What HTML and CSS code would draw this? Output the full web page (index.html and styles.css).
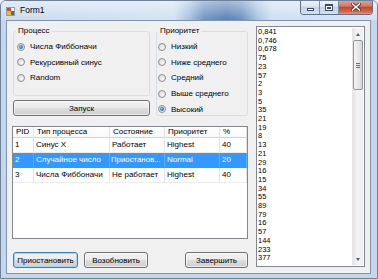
FILE: index.html
```html
<!DOCTYPE html>
<html lang="ru">
<head>
    <meta charset="UTF-8">
    <title>Form1</title>
    <link rel="stylesheet" href="styles.css">
</head>
<body>
    <div class="window">
        <div class="titlebar">
            <svg class="app-icon" width="9" height="9" viewBox="0 0 9 9">
                <rect x="0.5" y="0.5" width="8" height="8" fill="#fff" stroke="#9a9a9a" stroke-width="1"/>
                <rect x="1" y="1" width="4" height="3" fill="#e0452b"/>
                <rect x="1" y="4" width="4" height="4" fill="#f5c400"/>
                <rect x="5" y="4" width="3" height="4" fill="#2d6fd1"/>
            </svg>
            <span class="title">Form1</span>
            <div class="caption-buttons">
                <span class="cap-btn cap-min"><span class="glyph-min"></span></span>
                <span class="cap-btn cap-max"><span class="glyph-max"></span></span>
                <span class="cap-btn cap-close">
                    <svg width="10" height="8" viewBox="0 0 10 8">
                        <path d="M1.5 1 L8.5 7 M8.5 1 L1.5 7" stroke="#4a2a25" stroke-width="3.2" stroke-linecap="square"/>
                        <path d="M1.5 1 L8.5 7 M8.5 1 L1.5 7" stroke="#fff" stroke-width="1.6" stroke-linecap="square"/>
                    </svg>
                </span>
            </div>
        </div>

        <div class="client">
            <div class="left">
                <div class="top-panel">
                    <fieldset class="group group-process">
                        <legend>Процесс</legend>
                        <label class="radio-row"><span class="radio checked"></span>Числа Фиббоначи</label>
                        <label class="radio-row"><span class="radio"></span>Рекурсивный синус</label>
                        <label class="radio-row"><span class="radio"></span>Random</label>
                    </fieldset>
                    <fieldset class="group group-priority">
                        <legend>Приоритет</legend>
                        <label class="radio-row"><span class="radio"></span>Низкий</label>
                        <label class="radio-row"><span class="radio"></span>Ниже среднего</label>
                        <label class="radio-row"><span class="radio"></span>Средний</label>
                        <label class="radio-row"><span class="radio"></span>Выше среднего</label>
                        <label class="radio-row"><span class="radio checked"></span>Высокий</label>
                    </fieldset>
                    <button class="button button-start">Запуск</button>
                </div>

                <div class="listview">
                    <div class="lv-row lv-head">
                        <div class="lv-cell">PID</div>
                        <div class="lv-cell">Тип процесса</div>
                        <div class="lv-cell">Состояние</div>
                        <div class="lv-cell">Приоритет</div>
                        <div class="lv-cell">%</div>
                    </div>
                    <div class="lv-row">
                        <div class="lv-cell">1</div>
                        <div class="lv-cell">Синус X</div>
                        <div class="lv-cell">Работает</div>
                        <div class="lv-cell">Highest</div>
                        <div class="lv-cell">40</div>
                    </div>
                    <div class="lv-row selected">
                        <div class="lv-cell">2</div>
                        <div class="lv-cell">Случайное число</div>
                        <div class="lv-cell lv-cut">Приостанов...</div>
                        <div class="lv-cell">Normal</div>
                        <div class="lv-cell">20</div>
                    </div>
                    <div class="lv-row">
                        <div class="lv-cell">3</div>
                        <div class="lv-cell">Числа Фиббоначи</div>
                        <div class="lv-cell">Не работает</div>
                        <div class="lv-cell">Highest</div>
                        <div class="lv-cell">40</div>
                    </div>
                </div>

                <div class="actions">
                    <button class="button button-default">Приостановить</button>
                    <button class="button button-resume">Возобновить</button>
                    <button class="button button-end">Завершить</button>
                </div>
            </div>

            <div class="listbox">
                <div class="items">
                    <div>0,841</div>
                    <div>0,746</div>
                    <div>0,678</div>
                    <div>75</div>
                    <div>23</div>
                    <div>57</div>
                    <div>2</div>
                    <div>3</div>
                    <div>5</div>
                    <div>35</div>
                    <div>21</div>
                    <div>19</div>
                    <div>8</div>
                    <div>13</div>
                    <div>21</div>
                    <div>29</div>
                    <div>16</div>
                    <div>15</div>
                    <div>34</div>
                    <div>55</div>
                    <div>89</div>
                    <div>79</div>
                    <div>16</div>
                    <div>57</div>
                    <div>144</div>
                    <div>233</div>
                    <div>377</div>
                </div>
                <div class="scrollbar">
                    <div class="sb-btn"><span class="arrow-up"></span></div>
                    <div class="sb-track">
                        <div class="sb-thumb"><span class="grip"></span></div>
                    </div>
                    <div class="sb-btn"><span class="arrow-down"></span></div>
                </div>
            </div>
        </div>
    </div>
</body>
</html>
```

FILE: styles.css
```css
* {
    box-sizing: border-box;
}

body {
    margin: 0;
    background-color: #e9eef4;
    font-family: "Liberation Sans", Arial, sans-serif;
    font-size: 8px;
    color: #000;
}

.window {
    width: 378px;
    height: 279px;
    display: flex;
    flex-direction: column;
    background-color: #c3d6eb;
    border: 1px solid #6f8299;
    border-radius: 6px 6px 0 0;
    overflow: hidden;
}

/* title bar */

.titlebar {
    height: 19px;
    flex-shrink: 0;
    display: flex;
    align-items: flex-start;
    background:
        linear-gradient(180deg, rgba(255, 255, 255, 0.45), rgba(255, 255, 255, 0) 18px),
        linear-gradient(90deg, #cadcf0 0%, #d3e3f3 46%, #a9c3e1 50%, #7396c3 54%, #5d84b7 60%, #6e93c1 64%, #a9c4e2 68%, #cfe0f2 72%, #d4e3f3 100%);
}

.app-icon {
    margin: 6px 0 0 5px;
}

.title {
    margin: 4px 0 0 5px;
    line-height: 10px;
    font-size: 8.5px;
}

.caption-buttons {
    margin-left: auto;
    margin-right: 4px;
    margin-top: -1px;
    display: flex;
    height: 15px;
    border: 1px solid #5d6f86;
    border-top: none;
    border-radius: 0 0 4px 4px;
    overflow: hidden;
}

.cap-btn {
    display: flex;
    align-items: center;
    justify-content: center;
    width: 19px;
    background: linear-gradient(180deg, #f1f5fa 0%, #dbe6f2 45%, #c3d3e6 50%, #d3e1f0 100%);
    border-right: 1px solid #7d8fa6;
}

.cap-close {
    width: 33px;
    border-right: none;
    background: linear-gradient(180deg, #e9a695 0%, #d8745f 45%, #c5432f 50%, #cf6a52 85%, #e49a7f 100%);
}

.glyph-min {
    width: 7px;
    height: 3px;
    margin-top: 5px;
    background-color: #fff;
    border: 1px solid #3c4b5f;
}

.glyph-max {
    width: 8px;
    height: 7px;
    border: 1px solid #3c4b5f;
    border-top-width: 2px;
    background-color: #fff;
    box-shadow: inset 0 0 0 1px #fff, inset 0 0 0 2px #3c4b5f;
}

/* client area */

.client {
    margin: 0 6px 0 5px;
    height: 254px;
    border: 1px solid #8194ab;
    background-color: #f0f0f0;
    display: grid;
    grid-template-columns: 236px 109px;
    column-gap: 8px;
    padding: 5px 0 0 5px;
}

.left {
    display: flex;
    flex-direction: column;
}

.top-panel {
    display: grid;
    grid-template-columns: 137px 92px;
    grid-template-rows: 70px 16px;
    column-gap: 6px;
    row-gap: 4px;
    margin-left: 1px;
}

.group {
    margin: 0;
    min-width: 0;
    padding: 3px 0 0 3px;
    border: 1px solid #d5dfe5;
    border-radius: 3px;
}

.group legend {
    margin-left: -1px;
    padding: 0 2px;
    line-height: 10px;
}

.group-process {
    grid-column: 1;
    grid-row: 1;
}

.group-priority {
    grid-column: 2;
    grid-row: 1 / span 2;
    padding-left: 1px;
}

.group-priority legend {
    margin-left: 0;
}

.radio-row {
    display: flex;
    align-items: center;
    height: 15.6px;
    white-space: nowrap;
}

.radio {
    position: relative;
    width: 8px;
    height: 8px;
    margin-right: 5px;
    border-radius: 50%;
    border: 1px solid #909090;
    background: radial-gradient(circle at 60% 65%, #f8f8f8 0%, #e4e4e4 50%, #cfcfcf 100%);
}

.radio.checked::after {
    content: "";
    position: absolute;
    left: 1px;
    top: 1px;
    width: 4px;
    height: 4px;
    border-radius: 50%;
    background: radial-gradient(circle at 40% 40%, #7ec0f2 0%, #2a7ccc 55%, #174f8e 100%);
}

/* buttons */

.button {
    height: 16px;
    padding: 0;
    font-family: inherit;
    font-size: 8px;
    color: #000;
    border: 1px solid #707070;
    border-radius: 3px;
    background: linear-gradient(180deg, #f2f2f2 0%, #ebebeb 48%, #dddddd 52%, #cfcfcf 100%);
    box-shadow: inset 0 0 0 1px rgba(255, 255, 255, 0.6);
}

.button-start {
    grid-column: 1;
    grid-row: 2;
}

.button-default {
    width: 65px;
    border-color: #3c7fb1;
    box-shadow: inset 0 0 0 1px #a6d6f6;
}

.button-resume {
    width: 64px;
    margin-left: 6px;
}

.button-end {
    width: 63px;
    margin-left: auto;
}

/* list view */

.listview {
    margin-top: 10px;
    height: 113px;
    border: 1px solid #828790;
    background-color: #fff;
    overflow: hidden;
}

.lv-row {
    display: grid;
    grid-template-columns: 21px 76px 55px 55px 27px;
    height: 15px;
}

.lv-cell {
    padding: 0 0 0 2px;
    line-height: 14px;
    border-right: 1px solid #e3e3e3;
    border-bottom: 1px solid #ececec;
    white-space: nowrap;
    overflow: hidden;
}

.lv-cut {
    font-size: 7.8px;
    padding-left: 1px;
}

.lv-head {
    height: 11px;
    background: linear-gradient(180deg, #ffffff 0%, #f7f8f9 100%);
}

.lv-head .lv-cell {
    padding-left: 3px;
    line-height: 10px;
    border-right-color: #e1e3e6;
    border-bottom-color: #d5d5d5;
}

.lv-row.selected {
    background-color: #3399ff;
    color: #fff;
}

.lv-row.selected .lv-cell {
    border-right-color: #5aacff;
    border-bottom-color: #3399ff;
}

.actions {
    margin-top: 13px;
    padding-left: 1px;
    display: flex;
}

/* list box */

.listbox {
    height: 241px;
    border: 1px solid #828790;
    background-color: #fff;
    display: flex;
    padding: 1px 1px 1px 0;
}

.items {
    flex: 1;
    padding: 0 0 0 1px;
    font-size: 7.5px;
    line-height: 8.7px;
    overflow: hidden;
}

.scrollbar {
    width: 11px;
    display: flex;
    flex-direction: column;
    background: linear-gradient(90deg, #e4e4e4 0%, #f3f3f3 40%, #f0f0f0 100%);
    border-left: 1px solid #e6e6e6;
}

.sb-btn {
    height: 12px;
    display: flex;
    align-items: center;
    justify-content: center;
}

.arrow-up,
.arrow-down {
    width: 0;
    height: 0;
    border-left: 2.5px solid transparent;
    border-right: 2.5px solid transparent;
}

.arrow-up {
    border-bottom: 3px solid #4d6185;
}

.arrow-down {
    border-top: 3px solid #4d6185;
}

.sb-track {
    flex: 1;
}

.sb-thumb {
    height: 50px;
    border: 1px solid #959595;
    border-radius: 2px;
    background: linear-gradient(90deg, #f4f4f4 0%, #e9e9e9 50%, #d7d7d7 100%);
    display: flex;
    align-items: center;
    justify-content: center;
}

.grip {
    width: 4px;
    height: 5px;
    background: repeating-linear-gradient(180deg, #6f6f6f 0, #6f6f6f 1px, transparent 1px, transparent 2px);
}
```
